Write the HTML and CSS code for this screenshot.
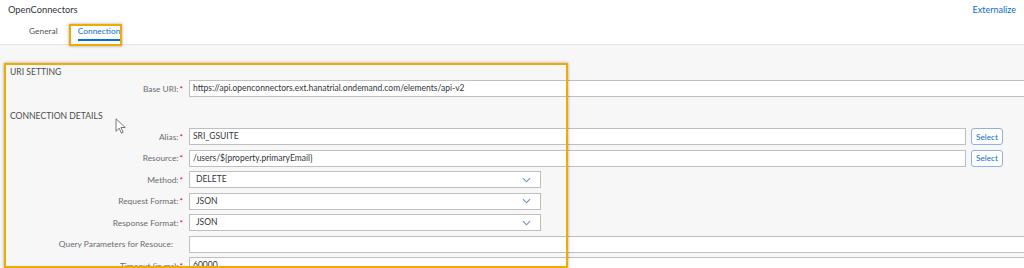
FILE: index.html
```html
<!DOCTYPE html>
<html lang="en">
<head>
  <meta charset="UTF-8">
  <title>OpenConnectors</title>
  <link rel="stylesheet" href="styles.css">
</head>
<body>
  <div class="header">
    <div class="title-row">
      <span class="title">OpenConnectors</span>
      <a class="link">Externalize</a>
    </div>
    <div class="tabs">
      <span class="tab">General</span>
      <span class="tab active">Connection</span>
    </div>
  </div>

  <div class="content">
    <div class="section">URI SETTING</div>
    <div class="row">
      <label>Base URI:<b>*</b></label>
      <div class="input wide">https://api.openconnectors.ext.hanatrial.ondemand.com/elements/api-v2</div>
    </div>

    <div class="section second">CONNECTION DETAILS</div>
    <div class="row">
      <label>Alias:<b>*</b></label>
      <div class="input long">SRI_GSUITE</div>
      <button class="btn">Select</button>
    </div>
    <div class="row">
      <label>Resource:<b>*</b></label>
      <div class="input long">/users/${property.primaryEmail}</div>
      <button class="btn">Select</button>
    </div>
    <div class="row">
      <label>Method:<b>*</b></label>
      <div class="input select">DELETE<svg viewBox="0 0 10 6"><path d="M1 1l4 4 4-4" /></svg></div>
    </div>
    <div class="row">
      <label>Request Format:<b>*</b></label>
      <div class="input select">JSON<svg viewBox="0 0 10 6"><path d="M1 1l4 4 4-4" /></svg></div>
    </div>
    <div class="row">
      <label>Response Format:<b>*</b></label>
      <div class="input select">JSON<svg viewBox="0 0 10 6"><path d="M1 1l4 4 4-4" /></svg></div>
    </div>
    <div class="row">
      <label class="plain">Query Parameters for Resouce:</label>
      <div class="input wide"></div>
    </div>
    <div class="row">
      <label>Timeout (in ms):<b>*</b></label>
      <div class="input wide">60000</div>
    </div>
  </div>

  <div class="mark tab-mark"></div>
  <div class="mark form-mark"></div>
  <svg class="cursor" viewBox="0 0 12 18"><path d="M1 1v14l3.5-3.5 2.5 5.5 2-1-2.5-5.3h4.8z" /></svg>
</body>
</html>
```

FILE: styles.css
```css
body {
  margin: 0;
  font-family: Lato, "Liberation Sans", sans-serif;
  font-size: 9px;
  color: #32363a;
  background: #f7f7f7;
  overflow: hidden;
  height: 268px;
}
.header {
  background: #fff;
  height: 44px;
  border-bottom: 1px solid #e4e4e4;
}
.title-row {
  display: flex;
  justify-content: space-between;
  padding: 0 8px;
  height: 18px;
  align-items: center;
}
.title {
  font-size: 9.3px;
  color: #32363a;
}
.link {
  color: #0a6ed1;
  font-size: 9px;
}
.tabs {
  display: flex;
  padding-left: 29px;
  gap: 20px;
  font-size: 8.4px;
  height: 23px;
}
.tab {
  color: #555;
  padding-top: 8px;
  box-sizing: border-box;
}
.tab.active {
  color: #0a6ed1;
  border-bottom: 2px solid #0a6ed1;
  height: 23px;
}
.content {
  padding: 20px 0 0 0;
}
.section {
  padding-left: 10px;
  font-size: 8.6px;
  color: #4a4d50;
  height: 15px;
  line-height: 14px;
}
.section.second {
  margin-top: 12px;
  margin-bottom: 4px;
}
.row {
  display: flex;
  align-items: center;
  height: 17px;
  margin-bottom: 4.5px;
}
label {
  width: 183px;
  flex-shrink: 0;
  text-align: right;
  color: #6a6d70;
  font-size: 8.4px;
}
label b {
  color: #e00;
  font-weight: normal;
  margin-left: 1px;
}
label.plain {
  padding-right: 10px;
  box-sizing: border-box;
}
.input {
  margin-left: 6px;
  height: 17px;
  box-sizing: border-box;
  background: #fff;
  border: 1px solid #bfbfbf;
  padding: 0 3px;
  font-size: 8.5px;
  line-height: 15px;
  color: #32363a;
  white-space: nowrap;
  flex-shrink: 0;
}
.input.wide {
  width: 850px;
}
.input.long {
  width: 777px;
}
.input.select {
  width: 352px;
  padding-left: 6px;
  display: flex;
  align-items: center;
  justify-content: space-between;
}
.input.select svg {
  width: 9px;
  height: 6px;
  margin-right: 6px;
}
.input.select path {
  fill: none;
  stroke: #6a8fc8;
  stroke-width: 1.2;
}
.btn {
  margin-left: 5px;
  height: 17px;
  width: 32px;
  padding: 0;
  font-family: inherit;
  font-size: 8.2px;
  color: #0a6ed1;
  background: #fff;
  border: 1px solid #8fb3dd;
  border-radius: 3px;
}
.mark {
  position: absolute;
  border: 2px solid #f0ab00;
  box-shadow: 0 0 3px rgba(0, 0, 0, 0.35);
}
.tab-mark {
  left: 69px;
  top: 24px;
  width: 49px;
  height: 18px;
}
.form-mark {
  left: 4px;
  top: 63px;
  width: 560px;
  height: 201px;
}
.cursor {
  position: absolute;
  left: 115px;
  top: 118px;
  width: 11px;
  height: 16px;
}
.cursor path {
  fill: #fff;
  stroke: #555;
  stroke-width: 0.9;
  stroke-linejoin: round;
}
```
